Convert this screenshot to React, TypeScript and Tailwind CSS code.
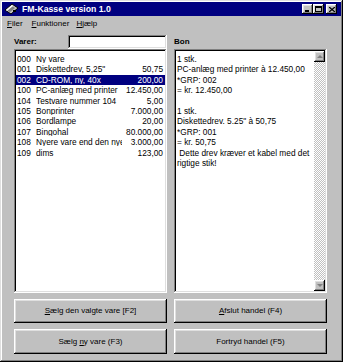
import React from "react";

const items = [
  { code: "000", name: "Ny vare", price: "" },
  { code: "001", name: "Diskettedrev, 5,25\"", price: "50,75" },
  { code: "002", name: "CD-ROM, ny, 40x", price: "200,00" },
  { code: "100", name: "PC-anlæg med printer", price: "12.450,00" },
  { code: "104", name: "Testvare nummer 104", price: "5,00" },
  { code: "105", name: "Bonprinter", price: "7.000,00" },
  { code: "106", name: "Bordlampe", price: "20,00" },
  { code: "107", name: "Bingohal", price: "80.000,00" },
  { code: "108", name: "Nyere vare end den nye", price: "3.000,00" },
  { code: "109", name: "dims", price: "123,00" },
];

const bon = [
  "1 stk.",
  "PC-anlæg med printer à 12.450,00",
  "*GRP: 002",
  "= kr. 12.450,00",
  "",
  "1 stk.",
  "Diskettedrev. 5.25\" à 50,75",
  "*GRP: 001",
  "= kr. 50,75",
  " Dette drev kræver et kabel med det",
  "rigtige stik!",
];

const raised =
  "shadow-[inset_-1px_-1px_#000,inset_1px_1px_#fff,inset_-2px_-2px_#808080,inset_2px_2px_#dfdfdf]";
const sunken =
  "shadow-[inset_-1px_-1px_#fff,inset_1px_1px_#808080,inset_-2px_-2px_#dfdfdf,inset_2px_2px_#000]";

function TitleButton({ children, className = "" }: { children: React.ReactNode; className?: string }) {
  return (
    <div
      className={`w-[11px] h-[10px] bg-[#c0c0c0] flex items-center justify-center ${raised} ${className}`}
    >
      {children}
    </div>
  );
}

function Button({ children, tall }: { children: React.ReactNode; tall?: boolean }) {
  return (
    <div
      className={`${tall ? "h-[25px]" : "h-[24px]"} bg-[#c0c0c0] flex items-center justify-center text-[8px] text-black ${raised}`}
    >
      {children}
    </div>
  );
}

export default function App() {
  return (
    <div className="w-[343px] h-[362px] bg-[#c0c0c0] p-[2px] font-['Liberation_Sans',Arial,sans-serif] shadow-[inset_-1px_-1px_#000,inset_1px_1px_#dfdfdf,inset_-2px_-2px_#808080,inset_2px_2px_#fff] overflow-hidden">
      {/* title bar */}
      <div className="h-[14px] bg-[#000080] flex items-center pl-[2px] pr-[4px]">
        <svg width="15" height="12" viewBox="0 0 15 12" className="shrink-0">
          <polygon points="1,7 8,1 14,5 7,11" fill="#c0c0c0" stroke="#000" strokeWidth="1" />
          <polygon points="3,7 8,3 11,5 6,9" fill="#808080" />
          <polygon points="2,7 8,2 9,3 3,8" fill="#fff" />
          <rect x="9" y="7" width="3" height="2" fill="#000" />
        </svg>
        <span className="ml-[3px] text-white font-bold text-[8.7px] leading-none">FM-Kasse version 1.0</span>
        <div className="ml-auto flex items-center">
          <TitleButton>
            <div className="w-[4px] h-[2px] bg-black mt-[4px] mr-[1px]" />
          </TitleButton>
          <TitleButton>
            <div className="w-[7px] h-[6px] border border-black border-t-2" />
          </TitleButton>
          <TitleButton className="ml-[2px]">
            <svg width="6" height="5" viewBox="0 0 6 5">
              <path d="M0 0 L6 5 M6 0 L0 5" stroke="#000" strokeWidth="1.3" />
            </svg>
          </TitleButton>
        </div>
      </div>

      {/* menu bar */}
      <div className="h-[16px] flex items-center pl-[5px] gap-[9px] text-[8px] text-black">
        <span>
          <u>F</u>iler
        </span>
        <span>
          <u>F</u>unktioner
        </span>
        <span className="ml-[-2px]">
          <u>H</u>jælp
        </span>
      </div>

      <div className="pl-[12px] pr-[14px] pt-[3px]">
        <div className="grid grid-cols-2 gap-x-[7px]">
          {/* left column */}
          <div className="flex flex-col">
            <div className="h-[14px] flex items-center">
              <span className="text-[8px] font-bold text-black">Varer:</span>
              <div className={`ml-auto w-[99px] h-[14px] bg-white ${sunken}`} />
            </div>
            <div className={`h-[244px] bg-white pt-[5px] px-[2px] overflow-hidden ${sunken}`}>
              {items.map((it) => {
                const sel = it.code === "002";
                return (
                  <div
                    key={it.code}
                    className={`h-[10.4px] flex items-center text-[8.3px] leading-none whitespace-nowrap ${
                      sel ? "bg-[#000080] text-white" : "text-black"
                    }`}
                  >
                    <span className="w-[20px] pl-[1px] shrink-0">{it.code}</span>
                    <span className="w-[86px] shrink-0 overflow-hidden">{it.name}</span>
                    <span className="flex-1 text-right pr-[2px]">{it.price}</span>
                  </div>
                );
              })}
            </div>
          </div>

          {/* right column */}
          <div className="flex flex-col">
            <div className="h-[14px] flex items-center">
              <span className="text-[8px] font-bold text-black">Bon</span>
            </div>
            <div className={`h-[244px] bg-white p-[2px] flex ${sunken}`}>
              <div className="flex-1 pt-[3px] pl-[1px] overflow-hidden">
                {bon.map((l, i) => (
                  <div key={i} className="h-[10.4px] flex items-center text-[8.3px] leading-none text-black whitespace-pre">
                    {l}
                  </div>
                ))}
              </div>
              <div className="w-[11px] flex flex-col bg-[repeating-conic-gradient(#fff_0_25%,#c0c0c0_0_50%)] bg-[length:2px_2px]">
                <div className={`h-[11px] bg-[#c0c0c0] flex items-center justify-center ${raised}`}>
                  <div className="w-0 h-0 border-l-[3px] border-r-[3px] border-b-[3px] border-l-transparent border-r-transparent border-b-[#808080]" />
                </div>
                <div className="flex-1" />
                <div className={`h-[11px] bg-[#c0c0c0] flex items-center justify-center ${raised}`}>
                  <div className="w-0 h-0 border-l-[3px] border-r-[3px] border-t-[3px] border-l-transparent border-r-transparent border-t-[#808080]" />
                </div>
              </div>
            </div>
          </div>
        </div>

        {/* buttons */}
        <div className="grid grid-cols-2 gap-x-[7px] gap-y-[6px] mt-[6px]">
          <Button>
            <span>
              <u>S</u>ælg den valgte vare [F2]
            </span>
          </Button>
          <Button>
            <span>
              <u>A</u>fslut handel (F4)
            </span>
          </Button>
          <Button tall>
            <span>
              Sælg <u>n</u>y vare (F3)
            </span>
          </Button>
          <Button tall>
            <span>Fortryd handel (F5)</span>
          </Button>
        </div>
      </div>
    </div>
  );
}
